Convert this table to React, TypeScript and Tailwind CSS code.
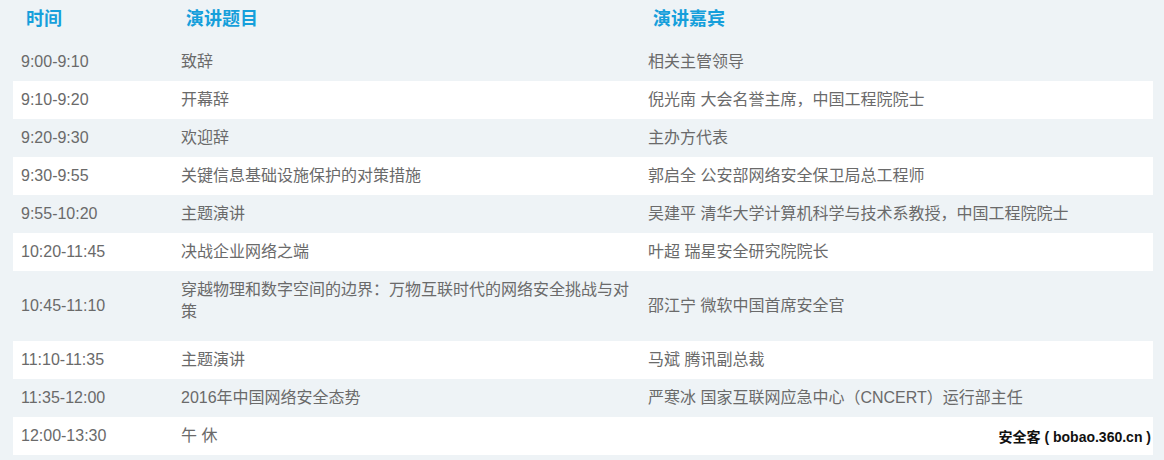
import React from "react";

type Row = { time: string; topic: string; speaker: string; tall?: boolean };

const rows: Row[] = [
  { time: "9:00-9:10", topic: "致辞", speaker: "相关主管领导" },
  { time: "9:10-9:20", topic: "开幕辞", speaker: "倪光南 大会名誉主席，中国工程院院士" },
  { time: "9:20-9:30", topic: "欢迎辞", speaker: "主办方代表" },
  { time: "9:30-9:55", topic: "关键信息基础设施保护的对策措施", speaker: "郭启全 公安部网络安全保卫局总工程师" },
  { time: "9:55-10:20", topic: "主题演讲", speaker: "吴建平 清华大学计算机科学与技术系教授，中国工程院院士" },
  { time: "10:20-11:45", topic: "决战企业网络之端", speaker: "叶超 瑞星安全研究院院长" },
  {
    time: "10:45-11:10",
    topic: "穿越物理和数字空间的边界：万物互联时代的网络安全挑战与对策",
    speaker: "邵江宁 微软中国首席安全官",
    tall: true,
  },
  { time: "11:10-11:35", topic: "主题演讲", speaker: "马斌 腾讯副总裁" },
  { time: "11:35-12:00", topic: "2016年中国网络安全态势", speaker: "严寒冰 国家互联网应急中心（CNCERT）运行部主任" },
  { time: "12:00-13:30", topic: "午 休", speaker: "" },
];

export default function App() {
  return (
    <div
      className="relative h-[460px] w-full overflow-hidden bg-[#eef3f6] pl-[13px] pr-[11px]"
      style={{ fontFamily: '"Liberation Sans", "Noto Sans CJK SC", sans-serif' }}
    >
      <div className="grid h-[43px] grid-cols-[160px_467px_1fr] text-[18px] font-bold leading-[18px] text-[#169fdb]">
        <div className="pl-[13px] pt-[10px]">时间</div>
        <div className="pl-[13px] pt-[10px]">演讲题目</div>
        <div className="pl-[13px] pt-[10px]">演讲嘉宾</div>
      </div>
      <div className="flex flex-col">
        {rows.map((r, i) => (
          <div
            key={i}
            className={`grid grid-cols-[160px_467px_1fr] text-[16px] leading-[22px] text-[#6a6a6a] ${
              i % 2 === 0 ? "bg-[#eef3f6]" : "bg-white"
            } ${r.tall ? "h-[70px]" : "h-[38px]"}`}
          >
            <div className="flex items-center pl-[8px]">{r.time}</div>
            <div className={`flex items-center px-[8px] ${r.tall ? "pb-[10px]" : ""}`}>{r.topic}</div>
            <div className="flex items-center px-[8px]">{r.speaker}</div>
          </div>
        ))}
      </div>
      <div
        className="absolute bottom-[14px] right-[13px] text-[14px] font-semibold leading-[18px] text-[#111]"
        style={{ textShadow: "0 0 2px #fff" }}
      >
        安全客 ( bobao.360.cn )
      </div>
    </div>
  );
}
